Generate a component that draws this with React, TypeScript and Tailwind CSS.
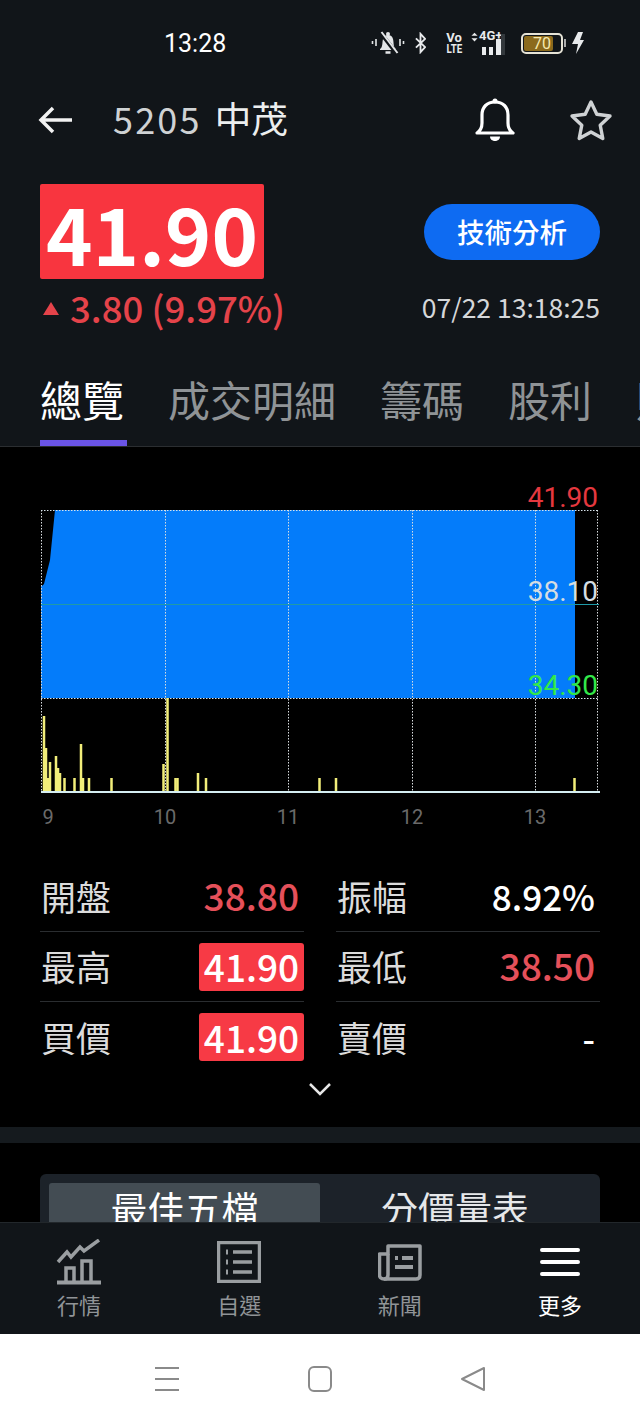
const bars = [
  [44, 716], [46, 748], [48, 778], [50, 762], [56, 756], [58, 768], [60, 773], [64.5, 778], [74.5, 778],
  [81, 744], [83, 778], [89, 778], [111.5, 778], [163.5, 764], [167.5, 698], [175.5, 778], [177.5, 778],
  [198, 773], [206, 778], [319.5, 778], [336, 778], [574.5, 778],
]

const gridX = [41.5, 165.5, 288.5, 412.5, 535.5, 597.5]

const axis = [
  { label: '9', cls: 'left-[48px]' },
  { label: '10', cls: 'left-[165px]' },
  { label: '11', cls: 'left-[288px]' },
  { label: '12', cls: 'left-[412px]' },
  { label: '13', cls: 'left-[535px]' },
]

const Chart = () => (
  <div className="relative mt-[33px] h-[350px] w-full">
    <svg viewBox="0 480 640 350" className="block h-[350px] w-[640px]">
      <polygon points="42,586 44,584 50,560 55,510 575,510 575,698 41,698 41,586" fill="#047cfa" />
      {gridX.map((x) => (
        <line key={x} x1={x} x2={x} y1={510} y2={792} stroke="#d8dde0" strokeWidth="1" strokeDasharray="1.5 1.5" />
      ))}
      <line x1={41} x2={598} y1={510.5} y2={510.5} stroke="#d8e4ec" strokeWidth="1" strokeDasharray="1.5 1.5" />
      <line x1={41} x2={598} y1={698.5} y2={698.5} stroke="#d8e4ec" strokeWidth="1" strokeDasharray="1.5 1.5" />
      <line x1={41} x2={599} y1={604.5} y2={604.5} stroke="#1f9aa8" strokeWidth="1" />
      {bars.map(([x, top]) => (
        <rect key={x} x={x - 1.25} y={top} width="2.5" height={792 - top} fill="#f2ee7a" />
      ))}
      <line x1={41} x2={600} y1={792} y2={792} stroke="#d5eef2" strokeWidth="2" />
    </svg>
    <span className="absolute right-[42px] top-[1px] text-[28px] leading-[34px] text-[#e5383f] font-['Roboto',sans-serif]">41.90</span>
    <span className="absolute right-[42px] top-[95px] text-[28px] leading-[34px] text-[#d5dde2] font-['Roboto',sans-serif]">38.10</span>
    <span className="absolute right-[42px] top-[189px] text-[28px] leading-[34px] text-[#33e84a] font-['Roboto',sans-serif]">34.30</span>
    {axis.map((a) => (
      <span key={a.label} className={`absolute top-[325px] -translate-x-1/2 text-[20px] leading-[24px] text-[#6a6a6a] font-['Roboto',sans-serif] ${a.cls}`}>
        {a.label}
      </span>
    ))}
  </div>
)

const Stat = ({ label, value, tone, line }: { label: string; value: string; tone: 'red' | 'white' | 'badge'; line?: boolean }) => (
  <div className={`flex h-[70px] items-center justify-between ${line ? 'border-b border-[#2a2d30]' : ''}`}>
    <span className="pb-[2px] pl-[1px] text-[35px] leading-none text-[#dcdcdc]">{label}</span>
    {tone === 'badge' ? (
      <span className="flex h-[48px] w-[105px] items-center justify-center rounded-[3px] bg-[#f73a45] text-[37px] font-medium leading-none text-white">{value}</span>
    ) : (
      <span className={`pb-[2px] pr-[5px] font-medium leading-none ${tone === 'red' ? 'text-[37px] text-[#e5505a]' : 'text-[35px] text-white'}`}>{value}</span>
    )}
  </div>
)

const StatusBar = () => (
  <div className="relative flex h-[86px] shrink-0 items-center pl-[164px] pr-[56px] pt-[0px]">
    <span className="text-[25px] leading-none text-white font-['Roboto',sans-serif]">13:28</span>
    <div className="ml-auto flex items-center">
      <svg width="34" height="24" viewBox="0 0 34 24" className="mr-[10px]" fill="none">
        <path d="M9 18c3-2 2-6 3-10 .6-2.500 2.500-4 5-4s4.400 1.500 5 4c1 4 0 8 3 10v1H9z" fill="#e4e6e8" />
        <circle cx="17" cy="3" r="2" fill="#e4e6e8" />
        <path d="M14.500 21.500h5" stroke="#e4e6e8" strokeWidth="2.500" />
        <path d="M9 1l17 22" stroke="#111519" strokeWidth="4" />
        <path d="M10.500 1l16 21" stroke="#e4e6e8" strokeWidth="2" />
        <path d="M1.500 10v3M5 8v7M29 8v7M32.500 10v3" stroke="#e4e6e8" strokeWidth="1.600" />
      </svg>
      <svg width="11" height="22" viewBox="0 0 12 22" className="mr-[20px]" fill="none">
        <path d="M1 6l10 9.500L6 21V1l5 5.500L1 16" stroke="#e8eaec" strokeWidth="2" />
      </svg>
      <div className="mr-[9px] flex w-[16px] flex-col items-center text-[13px] font-bold leading-[11px] text-[#e8eaec] font-['Roboto',sans-serif]">
        <span>Vo</span>
        <span className="scale-x-75">LTE</span>
      </div>
      <div className="relative mr-[18px] h-[24px] w-[32px]">
        <svg width="7" height="12" viewBox="0 0 8 12" className="absolute left-0 top-[0px]" fill="#e8eaec">
          <path d="M4 1l3.500 3.500h-7zM4 11L.5 7.500h7z" />
        </svg>
        <span className="absolute left-[8px] top-[-2px] text-[13px] font-bold leading-[14px] text-[#e8eaec] font-['Roboto',sans-serif]">4G+</span>
        <div className="absolute bottom-0 left-[11px] flex items-end gap-[3px]">
          <span className="h-[8px] w-[4px] bg-[#e8eaec]" />
          <span className="h-[8px] w-[4px] bg-[#e8eaec]" />
          <span className="h-[16px] w-[5px] bg-[#e8eaec]" />
        </div>
        <span className="absolute bottom-0 left-[30px] h-[21px] w-[4px] bg-[#33383c]" />
      </div>
      <div className="relative flex h-[21px] w-[42px] items-center rounded-[5px] border-2 border-[#e6e3d6] p-[1px]">
        <span className="h-full w-[29px] rounded-[2px] bg-[#8b6a1c]" />
        <span className="absolute left-[10px] top-[-1px] text-[16px] leading-[19px] text-[#f7e9ae] font-['Roboto',sans-serif]">70</span>
      </div>
      <span className="ml-[1px] mr-[6px] h-[8px] w-[2px] bg-[#aaaaaa]" />
      <svg width="12" height="22" viewBox="0 0 12 22" fill="#e8eaec">
        <path d="M6 0h5L8 8h4L4 22l2-10H0z" />
      </svg>
    </div>
  </div>
)

const Header = () => (
  <div className="flex h-[68px] shrink-0 items-center pl-[38px] pr-[27px]">
    <svg width="36" height="30" viewBox="0 0 36 30" fill="none" className="mr-[39px]">
      <path d="M34 15H3M15 3L3 15l12 12" stroke="#f2f2f2" strokeWidth="3.500" />
    </svg>
    <span className="mb-[4px] flex items-center text-[36px] leading-none text-[#cfd2d4]">
      <span className="tracking-[2.2px]">5205</span>
      <span className="ml-[13px] text-[36.5px] text-[#eceeee]">中茂</span>
    </span>
    <svg width="42" height="46" viewBox="0 0 42 46" fill="none" className="ml-auto mr-[53px]">
      <path d="M3 36c3-2 5-5 5-10v-8c0-8 5-13 13-13s13 5 13 13v8c0 5 2 8 5 10z" stroke="#fff" strokeWidth="3.200" strokeLinejoin="round" />
      <circle cx="21" cy="4" r="2.500" fill="#fff" />
      <path d="M16 39.500c0 6 10 6 10 0z" fill="#fff" />
    </svg>
    <svg width="44" height="42" viewBox="0 0 44 42" fill="none">
      <path d="M22 3l5.800 12.300 13.200 1.700-9.800 9.200 2.600 13.300L22 33l-11.800 6.500 2.600-13.300L3 17l13.200-1.700z" stroke="#cfd2d4" strokeWidth="3.400" strokeLinejoin="round" />
    </svg>
  </div>
)

const Quote = () => (
  <div className="flex shrink-0 justify-between pl-[40px] pr-[40px] pt-[30px]">
    <div>
      <div className="flex h-[95px] w-[224px] items-center justify-center rounded-[2px] bg-[#f8353f] text-[79px] font-bold leading-none text-white">41.90</div>
      <div className="mt-[8px] flex items-center text-[#e5434a]">
        <svg width="18" height="13" viewBox="0 0 18 13" className="ml-[2px] mr-[10px]" fill="#e5434a">
          <path d="M9 0l8 13H1z" />
        </svg>
        <span className="text-[36.5px] font-medium leading-[42px]">3.80 (9.97%)</span>
      </div>
    </div>
    <div className="flex flex-col items-end pt-[20px]">
      <div className="flex h-[56px] w-[176px] items-center justify-center rounded-full bg-[#0e6bf2] text-[27.5px] font-medium leading-none text-white">技術分析</div>
      <span className="mt-[32px] text-[26.5px] leading-[30px] text-[#d5d7d9]">07/22 13:18:25</span>
    </div>
  </div>
)

const tabs = ['總覽', '成交明細', '籌碼', '股利', '財務']

const Tabs = () => (
  <div className="flex h-[118px] shrink-0 items-start gap-[44px] overflow-hidden border-b border-[#2b2e31] pl-[40px] pt-[45px]">
    {tabs.map((t, i) => (
      <span key={t} className={`relative h-[72px] shrink-0 text-[42px] leading-[50px] ${i === 0 ? 'text-white' : 'text-[#8f9396]'}`}>
        {t}
        {i === 0 && <span className="absolute bottom-[0px] left-0 h-[6px] w-[87px] bg-[#6a54e6]" />}
      </span>
    ))}
  </div>
)

const NavItem = ({ label, active, children }: { label: string; active?: boolean; children: React.ReactNode }) => (
  <div className="flex w-[80px] flex-col items-center">
    <div className="flex h-[48px] items-center justify-center">{children}</div>
    <span className={`mt-[3px] text-[22px] leading-[30px] ${active ? 'text-white' : 'text-[#909497]'}`}>{label}</span>
  </div>
)

const BottomNav = () => (
  <div className="flex h-[112px] shrink-0 items-start justify-between border-t border-[#22272b] bg-[#111519] pl-[39px] pr-[40px] pt-[15px]">
    <NavItem label="行情">
      <svg width="46" height="46" viewBox="0 0 46 46" fill="none" stroke="#9a9ea1">
        <path d="M1 43.500h44" strokeWidth="4" />
        <path d="M10 43V29h8v14M26 43V22h9v21" strokeWidth="3.500" />
        <path d="M2 23l9-10 4 5 9-10 4 4L43 1" strokeWidth="3.500" />
      </svg>
    </NavItem>
    <NavItem label="自選">
      <svg width="44" height="42" viewBox="0 0 44 42" fill="none" stroke="#9a9ea1">
        <rect x="1.500" y="1.500" width="41" height="39" strokeWidth="3.500" />
        <path d="M9 11h2M9 21h2M9 31h2" strokeWidth="5" />
        <path d="M16 11h19M16 21h19M16 31h19" strokeWidth="3.500" />
      </svg>
    </NavItem>
    <NavItem label="新聞">
      <svg width="44" height="38" viewBox="0 0 44 38" fill="none" stroke="#9a9ea1" strokeWidth="3.500">
        <path d="M10 3h32v29c0 2-1 4-4 4H6c-3 0-4.500-2-4.500-4V11H10z" strokeLinejoin="round" />
        <path d="M10 11v21c0 2-1 4-4 4" />
        <path d="M17 15h3" strokeWidth="4" />
        <path d="M24 15h11M17 24h18" strokeWidth="4" />
      </svg>
    </NavItem>
    <NavItem label="更多" active>
      <svg width="40" height="30" viewBox="0 0 40 30" fill="none" stroke="#fff" strokeWidth="4" strokeLinecap="round">
        <path d="M2 3h36M2 15h36M2 27h36" />
      </svg>
    </NavItem>
  </div>
)

const SystemNav = () => (
  <div className="flex h-[88px] shrink-0 items-start justify-center gap-[129px] bg-white pt-[32px]">
    <svg width="24" height="26" viewBox="0 0 24 26" fill="none" stroke="#8a8a8a" strokeWidth="2">
      <path d="M0 2h24M0 13h24M0 24h24" />
    </svg>
    <svg width="24" height="26" viewBox="0 0 24 26" fill="none" stroke="#8a8a8a" strokeWidth="2">
      <rect x="1" y="1" width="22" height="24" rx="5" />
    </svg>
    <svg width="24" height="26" viewBox="0 0 24 26" fill="none" stroke="#8a8a8a" strokeWidth="2" strokeLinejoin="round">
      <path d="M23 2v22L1 13z" />
    </svg>
  </div>
)

const App = () => (
  <div className="flex h-[1422px] w-[640px] flex-col overflow-hidden bg-[#111519] font-['Noto_Sans_CJK_TC','Noto_Sans',sans-serif]">
    <StatusBar />
    <Header />
    <Quote />
    <Tabs />
    <div className="min-h-0 flex-1 overflow-hidden bg-black">
      <Chart />
      <div className="mt-[32px] grid grid-cols-2 gap-x-[32px] px-[40px]">
        <Stat label="開盤" value="38.80" tone="red" line />
        <Stat label="振幅" value="8.92%" tone="white" line />
        <Stat label="最高" value="41.90" tone="badge" line />
        <Stat label="最低" value="38.50" tone="red" line />
        <Stat label="買價" value="41.90" tone="badge" />
        <Stat label="賣價" value="-" tone="white" />
      </div>
      <div className="mt-[2px] flex h-[30px] items-center justify-center">
        <svg width="24" height="14" viewBox="0 0 24 14" fill="none" stroke="#e6e6e6" strokeWidth="2.500">
          <path d="M2 2l10 10L22 2" />
        </svg>
      </div>
      <div className="mt-[23px] h-[16px] bg-[#151a1e]" />
      <div className="mx-[40px] mt-[31px] flex h-[70px] rounded-[6px] bg-[#1c2229] pl-[9px] pt-[9px]">
        <div className="flex h-[60px] w-[271px] items-start justify-center rounded-[3px] bg-[#434c53] text-[37px] leading-[50px] text-white">最佳五檔</div>
        <div className="flex h-[60px] flex-1 items-start justify-center pr-[10px] text-[37px] leading-[50px] text-[#e6e8ea]">分價量表</div>
      </div>
    </div>
    <BottomNav />
    <SystemNav />
  </div>
)

export default App
